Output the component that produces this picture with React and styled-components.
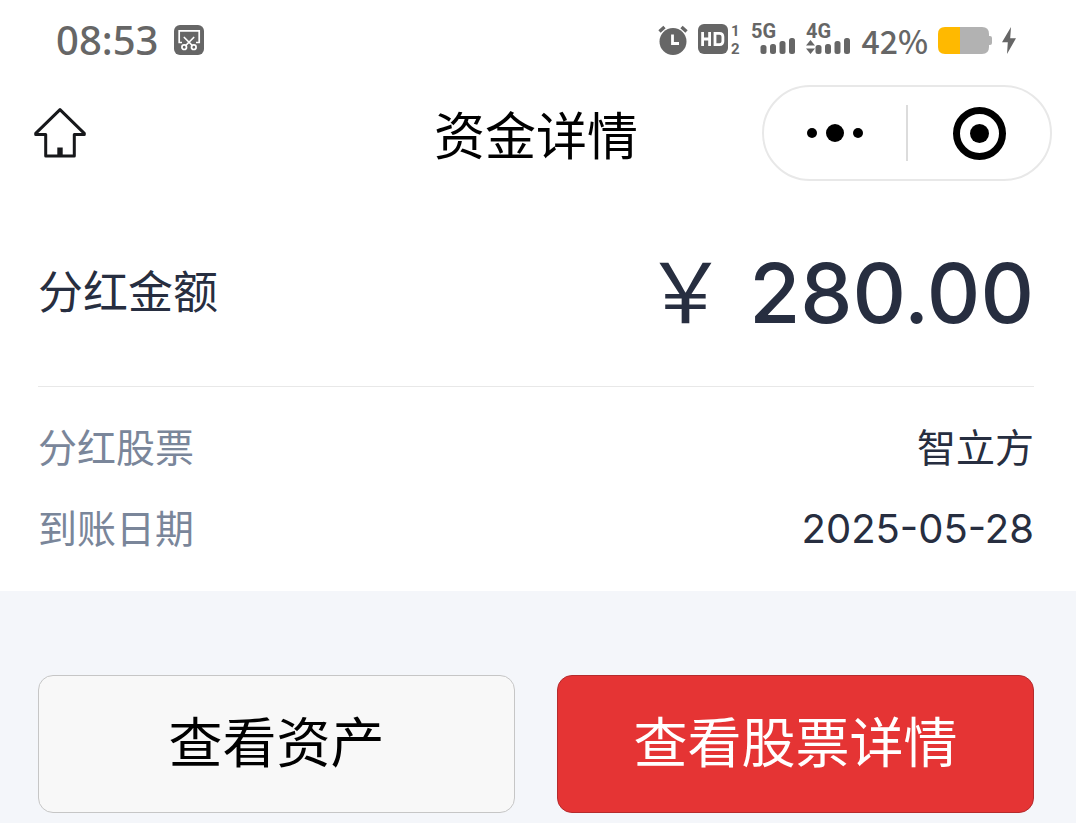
import React from 'react';
import styled, { createGlobalStyle } from 'styled-components';

const GlobalStyle = createGlobalStyle`
    * {
        box-sizing: border-box;
    }

    body {
        margin: 0;
        background: #f4f6fa;
        font-family: Inter, "Noto Sans CJK SC", sans-serif;
        color: #272e40;
    }
`;

const Header = styled.header`
    background: #fff;
`;

const StatusBar = styled.div`
    display: flex;
    justify-content: space-between;
    align-items: center;
    height: 80px;
    padding: 0 60px 0 56px;
    color: #666;
`;

const StatusGroup = styled.div`
    display: flex;
    align-items: center;
    gap: ${props => props.gap};
`;

const Clock = styled.time`
    font-family: "Noto Sans", sans-serif;
    font-size: 40px;
    line-height: 52px;
    font-weight: 500;
`;

const BatteryLevel = styled.span`
    font-family: "Noto Sans CJK SC", sans-serif;
    font-size: 32px;
    line-height: 48px;
    font-weight: 500;
`;

const Icon = styled.svg`
    display: block;
    flex: none;
`;

const SignalText = styled.text`
    font-family: Roboto, sans-serif;
    font-size: ${props => (props.$small ? '15px' : '20px')};
    font-weight: 700;
`;

const NavBar = styled.nav`
    display: grid;
    grid-template-columns: 1fr auto 1fr;
    align-items: center;
    height: 106px;
    padding: 0 24px 0 20px;
`;

const IconButton = styled.button`
    display: flex;
    justify-content: center;
    align-items: center;
    padding: 0;
    border: 0;
    background: none;
    color: #000;
    cursor: pointer;
`;

const HomeButton = styled(IconButton)`
    justify-self: start;
    padding-left: 14px;
`;

const Title = styled.h1`
    margin: 0;
    padding-top: 8px;
    color: #000;
    font-size: 51px;
    line-height: 72px;
    font-weight: 400;
`;

const Capsule = styled.div`
    display: grid;
    grid-template-columns: 1fr 2px 1fr;
    align-items: center;
    justify-self: end;
    width: 290px;
    height: 96px;
    border: 2px solid #e8e8e8;
    border-radius: 48px;
`;

const CapsuleDivider = styled.span`
    height: 56px;
    background: #dcdcdc;
`;

const Details = styled.main`
    padding: 0 42px 22px 38px;
    background: #fff;
`;

const AmountRow = styled.div`
    display: flex;
    justify-content: space-between;
    align-items: center;
    height: 201px;
    padding-top: 14px;
    border-bottom: 1px solid #e8e8e8;
`;

const AmountLabel = styled.span`
    font-size: 45px;
    line-height: 64px;
`;

const Amount = styled.strong`
    font-size: 83px;
    line-height: 120px;
    font-weight: 500;
`;

const Yen = styled.span`
    font-weight: 400;
`;

const InfoList = styled.dl`
    margin: 0;
    padding-top: 20px;
`;

const InfoRow = styled.div`
    display: flex;
    justify-content: space-between;
    align-items: center;
    height: 81px;
    font-size: 39px;
    line-height: 56px;
`;

const InfoLabel = styled.dt`
    color: #7a869a;
`;

const InfoValue = styled.dd`
    margin: 0;
    font-size: ${props => (props.$numeric ? '40px' : 'inherit')};
`;

const Actions = styled.footer`
    display: grid;
    grid-template-columns: 1fr 1fr;
    gap: 42px;
    padding: 84px 42px 10px 38px;
`;

const ActionButton = styled.button`
    height: 138px;
    padding: 0;
    border: 1px solid ${props => (props.$primary ? '#b52b2d' : '#c6c6c6')};
    border-radius: 15px;
    background: ${props => (props.$primary ? '#e53434' : '#f8f8f8')};
    color: ${props => (props.$primary ? '#fff' : '#000')};
    font-family: inherit;
    font-size: 54px;
    line-height: 76px;
    cursor: pointer;
`;

const ScreenshotIcon = () => (
    <Icon width="30" height="30" viewBox="0 0 30 30" fill="none" stroke="#fff" strokeWidth="1.7">
        <rect width="30" height="30" rx="6" fill="#666" stroke="none" />
        <path d="M8 17.5H5.2V5.8h20v11.7H22" />
        <path d="M10.3 12.5l8 8M19.7 12.5l-8 8" strokeLinecap="round" />
        <circle cx="10.2" cy="22.2" r="2.3" />
        <circle cx="19.8" cy="22.2" r="2.3" />
    </Icon>
);

const AlarmIcon = () => (
    <Icon width="30" height="30" viewBox="0 0 30 30" fill="none">
        <circle cx="15" cy="16.5" r="13.5" fill="#666" />
        <path d="M1.5 6.5l5-4.5M28.5 6.5l-5-4.5" stroke="#666" strokeWidth="3.4" />
        <path d="M14.5 9.5v9H21" stroke="#fff" strokeWidth="2.8" />
    </Icon>
);

const HdIcon = () => (
    <Icon width="43" height="44" viewBox="0 0 43 44" fill="#666">
        <rect y="6" width="30" height="30" rx="6" />
        <path d="M4.6 14v14M11.6 14v14M4.6 21h7" stroke="#fff" strokeWidth="2.8" fill="none" />
        <path d="M17 15.4h4.5q3.4 0 3.4 3.4v4.4q0 3.4-3.4 3.4H17z" stroke="#fff" strokeWidth="2.8" fill="none" />
        <SignalText x="33" y="18" $small>1</SignalText>
        <SignalText x="33" y="36" $small>2</SignalText>
    </Icon>
);

const SignalIcon = ({ label, arrows }) => (
    <Icon width="45" height="44" viewBox="0 0 45 44" fill="#666">
        <SignalText x="0" y="20">{label}</SignalText>
        {arrows && <path d="M0 27.5l4.5-5.5 4.5 5.5zM0 30.5h9l-4.5 5.5z" />}
        <rect x="9.5" y="27" width="6" height="9" rx="2.5" />
        <rect x="19" y="26" width="6" height="10" rx="2.5" />
        <rect x="28.5" y="23" width="6" height="13" rx="2.5" />
        <rect x="38" y="20" width="6" height="16" rx="2.5" />
    </Icon>
);

const BatteryIcon = () => (
    <Icon width="54" height="27" viewBox="0 0 54 27">
        <path d="M22 0h22q7 0 7 7v2h1q2 0 2 2v5q0 2-2 2h-1v2q0 7-7 7H22z" fill="#b2b2b2" />
        <path d="M7 0h15v27H7q-7 0-7-7V7q0-7 7-7z" fill="#ffb900" />
    </Icon>
);

const BoltIcon = () => (
    <Icon width="14" height="27" viewBox="0 0 14 27" fill="#666">
        <path d="M9 0L0 15.2h5.8L5 27l9-15.8H8.2z" />
    </Icon>
);

const HomeIcon = () => (
    <Icon width="52" height="50" viewBox="0 0 52 50" fill="none" stroke="#17181b" strokeWidth="3" strokeLinejoin="round">
        <path d="M26 1.7L1.7 25.3v1.2h10V48h28.6V26.5h10v-1.2z" />
        <path d="M26 39.5V48" strokeWidth="5.4" />
    </Icon>
);

const MoreIcon = () => (
    <Icon width="56" height="18" viewBox="0 0 56 18">
        <circle cx="5" cy="9" r="5" />
        <circle cx="28" cy="9" r="9" />
        <circle cx="51" cy="9" r="5" />
    </Icon>
);

const CloseIcon = () => (
    <Icon width="53" height="53" viewBox="0 0 53 53">
        <circle cx="26.5" cy="26.5" r="23" fill="none" stroke="#000" strokeWidth="7" />
        <circle cx="26.5" cy="26.5" r="9.5" />
    </Icon>
);

const details = [
    { label: '分红股票', value: '智立方' },
    { label: '到账日期', value: '2025-05-28', numeric: true },
];

const App = () => (
    <>
        <GlobalStyle />
        <Header>
            <StatusBar>
                <StatusGroup gap="16px">
                    <Clock>08:53</Clock>
                    <ScreenshotIcon />
                </StatusGroup>
                <StatusGroup gap="10px">
                    <AlarmIcon />
                    <HdIcon />
                    <SignalIcon label="5G" />
                    <SignalIcon label="4G" arrows />
                    <BatteryLevel>42%</BatteryLevel>
                    <BatteryIcon />
                    <BoltIcon />
                </StatusGroup>
            </StatusBar>
            <NavBar>
                <HomeButton type="button" aria-label="首页">
                    <HomeIcon />
                </HomeButton>
                <Title>资金详情</Title>
                <Capsule>
                    <IconButton type="button" aria-label="更多">
                        <MoreIcon />
                    </IconButton>
                    <CapsuleDivider />
                    <IconButton type="button" aria-label="关闭">
                        <CloseIcon />
                    </IconButton>
                </Capsule>
            </NavBar>
        </Header>
        <Details>
            <AmountRow>
                <AmountLabel>分红金额</AmountLabel>
                <Amount>
                    <Yen>￥</Yen> 280.00
                </Amount>
            </AmountRow>
            <InfoList>
                {details.map(item => (
                    <InfoRow key={item.label}>
                        <InfoLabel>{item.label}</InfoLabel>
                        <InfoValue $numeric={item.numeric}>{item.value}</InfoValue>
                    </InfoRow>
                ))}
            </InfoList>
        </Details>
        <Actions>
            <ActionButton type="button">查看资产</ActionButton>
            <ActionButton type="button" $primary>查看股票详情</ActionButton>
        </Actions>
    </>
);

export default App;
